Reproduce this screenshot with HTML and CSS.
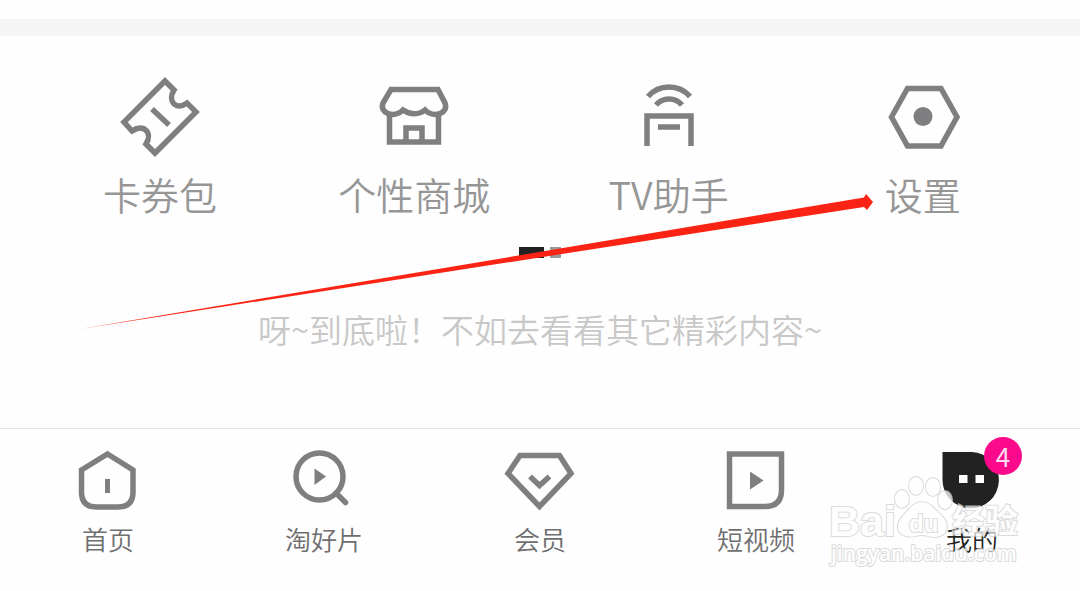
FILE: index.html
```
<!DOCTYPE html>
<html lang="zh-CN">
<head>
    <meta charset="UTF-8">
    <meta name="viewport" content="width=device-width, initial-scale=1.0">
    <title>我的</title>
    <link rel="stylesheet" href="styles.css">
</head>
<body>
    <div class="page">
        <div class="divider"></div>

        <!-- Shortcuts -->
        <main class="content">
            <nav class="shortcuts">
                <a class="shortcut" href="#">
                    <svg class="icon" viewBox="0 0 84 84">
                        <path d="M47 6L56 15C49 26 58 36 69 28L78 37L37 78L28 69C35 58 26 48 14 56L6 47Z"/>
                        <path d="M34 34L51 50"/>
                    </svg>
                    <span>卡券包</span>
                </a>
                <a class="shortcut" href="#">
                    <svg class="icon" viewBox="0 0 84 84">
                        <path d="M19 14.5H66L73 28C77 38 62 44 53 35C47 40 38 40 31 35C22 44 7 38 11 28Z"/>
                        <path d="M17.5 39V67H66.5V39M34 67V53H50V67"/>
                    </svg>
                    <span>个性商城</span>
                </a>
                <a class="shortcut" href="#">
                    <svg class="icon" viewBox="0 0 84 84">
                        <path d="M21 21.5A28 28 0 0 1 63 21.5M29 30A17 17 0 0 1 55 30"/>
                        <path d="M20 71V41H64V71M31 52H53"/>
                    </svg>
                    <span>TV助手</span>
                </a>
                <a class="shortcut" href="#">
                    <svg class="icon" viewBox="0 0 84 84">
                        <path d="M10.5 42L26.5 13.5H60L76 42L60 71H26.5Z"/>
                        <circle class="solid" cx="42" cy="41.5" r="9.5"/>
                    </svg>
                    <span>设置</span>
                </a>
            </nav>
            <div class="pager">
                <span class="dot active"></span>
                <span class="dot"></span>
            </div>
            <p class="end-note">呀~到底啦！不如去看看其它精彩内容~</p>
        </main>

        <!-- Bottom tabs -->
        <nav class="tabs">
            <a class="tab" href="#">
                <svg class="icon" viewBox="0 0 72 72">
                    <path d="M35.5 10L61 26V48Q61 63 46 63H24.5Q9.5 63 9.5 48V26Z"/>
                    <path class="solid" d="M33 35H38V49H33Z"/>
                </svg>
                <span>首页</span>
            </a>
            <a class="tab" href="#">
                <svg class="icon" viewBox="0 0 72 72">
                    <circle cx="31.5" cy="32.5" r="23.5"/>
                    <path class="round" d="M48 49L57.5 58.5"/>
                    <path class="solid" d="M26.5 24.5L38 32.5L26.5 41Z"/>
                </svg>
                <span>淘好片</span>
            </a>
            <a class="tab" href="#">
                <svg class="icon" viewBox="0 0 72 72">
                    <path d="M16 11.5H55.5L67 29.5L35.5 62.5L4 29.5Z"/>
                    <path d="M26 32.5L35.5 41.5L45.5 32.5"/>
                </svg>
                <span>会员</span>
            </a>
            <a class="tab" href="#">
                <svg class="icon" viewBox="0 0 72 72">
                    <path d="M9.5 10H61.5V46Q61.5 62.5 45 62.5H9.5Z"/>
                    <path class="solid" d="M30 27.5L43.5 36.5L30 45.5Z"/>
                </svg>
                <span>短视频</span>
            </a>
            <a class="tab current" href="#">
                <svg class="icon" viewBox="0 0 72 72">
                    <path class="solid" d="M6.5 8H36A28.2 28.2 0 1 1 6.5 36Z"/>
                    <path class="eyes" d="M23 31H31.5V39H23ZM39.5 31H48V39H39.5Z"/>
                </svg>
                <span>我的</span>
                <b class="badge">4</b>
            </a>
        </nav>

        <!-- Arrow and watermark drawn over the page -->
        <svg class="overlay" viewBox="0 0 1080 591">
            <path class="arrow" d="M80 329L864 197.5L866 194L873 202L867 210L864 207Z"/>
            <g class="watermark">
                <ellipse cx="902" cy="499" rx="7" ry="9"/>
                <ellipse cx="916" cy="486" rx="7" ry="9"/>
                <ellipse cx="933" cy="487" rx="7" ry="9"/>
                <ellipse cx="945" cy="500" rx="7" ry="9"/>
                <path d="M922 502C930 502 935 510 942 516C950 524 948 536 936 537C930 537 926 535 922 535C917 535 912 538 906 536C896 534 896 523 903 516C909 510 913 502 922 502Z"/>
                <text class="wm-logo" x="829" y="536">Bai</text>
                <text class="wm-du" x="909" y="532">du</text>
                <text class="wm-cn" x="952" y="533">经验</text>
                <text class="wm-url" x="831" y="561">jingyan.baidu.com</text>
            </g>
        </svg>
    </div>
</body>
</html>
```
FILE: styles.css
```
body {
    font-family: "Noto Sans CJK SC", sans-serif;
    background: #fefefe;
    color: #6e6e70;
    margin: 0;
}

a {
    color: inherit;
    text-decoration: none;
}

.page {
    position: relative;
    display: flex;
    flex-direction: column;
    min-height: 100vh;
    overflow: hidden;
}

.divider {
    height: 17px;
    margin-top: 19px;
    background: #f5f5f5;
}

.content {
    flex: 1;
    padding-top: 39px;
}

.icon {
    display: block;
    fill: none;
    stroke: #7f7f82;
    stroke-width: 5.5;
}

.icon .solid {
    fill: #7f7f82;
    stroke: none;
}

.icon .round {
    stroke-linecap: round;
}

.shortcuts {
    display: grid;
    grid-template-columns: repeat(4, 1fr);
    padding: 0 30px 0 33px;
}

.shortcut {
    display: flex;
    flex-direction: column;
    align-items: center;
    gap: 12px;
    font-size: 38px;
    font-weight: 350;
    line-height: 46px;
    color: #969696;
}

.shortcut .icon {
    width: 84px;
    height: 84px;
}

.pager {
    display: flex;
    justify-content: center;
    gap: 6px;
    margin-top: 30px;
}

.dot {
    width: 11px;
    height: 11px;
    background: #9a9a9a;
}

.dot.active {
    width: 25px;
    background: #222;
}

.end-note {
    margin: 51px 0 0;
    text-align: center;
    font-size: 33px;
    font-weight: 350;
    line-height: 40px;
    color: #c8c8c8;
}

.tabs {
    display: grid;
    grid-template-columns: repeat(5, 1fr);
    padding: 15px 0 36px;
    border-top: 1px solid #e4e4e4;
}

.tab {
    position: relative;
    display: flex;
    flex-direction: column;
    align-items: center;
    gap: 7px;
    font-size: 26px;
    font-weight: 350;
    line-height: 32px;
}

.tab .icon {
    width: 72px;
    height: 72px;
}

.tab.current {
    color: #222;
}

.current .icon .solid {
    fill: #222;
}

.current .icon .eyes {
    fill: #fff;
    stroke: none;
}

.badge {
    position: absolute;
    top: -7px;
    left: 50%;
    width: 38px;
    height: 38px;
    margin-left: 12px;
    border-radius: 50%;
    background: #fb0a8c;
    color: #ffdcf2;
    font-size: 26px;
    font-weight: 400;
    line-height: 38px;
    text-align: center;
}

.overlay {
    position: absolute;
    top: 0;
    left: 0;
    width: 100%;
    pointer-events: none;
}

.arrow {
    fill: #fb2414;
}

.watermark {
    fill: #fff;
    stroke: #cfcfcf;
    stroke-width: 2;
    paint-order: stroke;
    opacity: 0.75;
}

.wm-logo {
    font: bold 43px "Liberation Sans", sans-serif;
}

.wm-du {
    font: bold 24px "Liberation Sans", sans-serif;
}

.wm-cn {
    font-size: 33px;
    font-weight: 700;
}

.wm-url {
    font: 600 21px "Open Sans", sans-serif;
}
```
